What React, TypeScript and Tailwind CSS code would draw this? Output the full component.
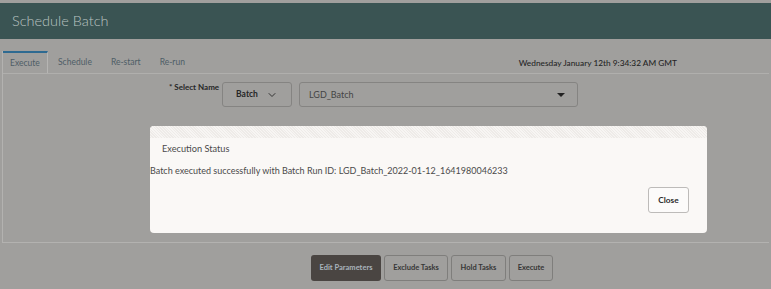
import { ChevronDown } from 'lucide-react';

const App = () => {
  return (
    <div
      className="relative h-[289px] w-[771px] overflow-hidden bg-[#a09f9d] text-[9px] text-[#2f2f2f]"
      style={{ fontFamily: 'Lato, "Noto Sans", sans-serif' }}>
      {/* Header */}
      <div className="mt-[3px] flex h-[36px] items-center bg-[#3a5453] px-[12px]">
        <h1 className="text-[14.5px] font-light text-[#b9c3c1]">Schedule Batch</h1>
      </div>

      {/* Panel */}
      <div className="mx-[2px] mt-[12px] h-[192px] border-b border-l border-[#b3b2b0]">
        {/* Tabs */}
        <div className="flex h-[23px] items-stretch border-b border-[#b0afad]">
          <div className="flex w-[45px] items-center justify-center border-r border-t-2 border-r-[#b6b5b3] border-t-[#2e6a91] pt-[1px] text-[8.5px] text-[#4e5d66]">
            Execute
          </div>
          <div className="flex items-center gap-[19px] pl-[10px] pt-[1px] text-[8.5px] text-[#4e5d66]">
            <span>Schedule</span>
            <span>Re-start</span>
            <span>Re-run</span>
          </div>
          <div className="ml-auto flex items-center whitespace-nowrap pr-[92px] pt-[2px] text-[8.3px] font-medium text-[#262626]">
            Wednesday January 12th 9:34:32 AM GMT
          </div>
        </div>

        {/* Select row */}
        <div className="mt-[8px] flex items-start pl-[164px]">
          <span className="-mt-[1px] w-[55px] whitespace-nowrap pl-[2px] text-[8px] font-bold text-[#262626]">* Select Name</span>
          <div className="flex h-[25px] w-[70px] items-center justify-center gap-[8px] rounded-[3px] border border-[#858482] text-[8.5px] font-bold text-[#262626]">
            Batch
            <ChevronDown className="h-[12px] w-[12px] text-[#333]" strokeWidth={2} />
          </div>
          <div className="ml-[7px] flex h-[25px] w-[279px] items-center justify-between rounded-[3px] border border-[#858482] pl-[9px] pr-[12px] text-[9px] text-[#444]">
            LGD_Batch
            <span className="h-0 w-0 border-x-[4px] border-t-[4px] border-x-transparent border-t-[#222]" />
          </div>
        </div>
      </div>

      {/* Action buttons */}
      <div className="mt-[12px] flex justify-center gap-[3px] pl-[93px] text-[7.5px] font-bold">
        <button className="h-[26px] w-[70px] whitespace-nowrap rounded-[3px] bg-[#4a4542] text-[#a9b4bc]">Edit Parameters</button>
        <button className="h-[26px] w-[64px] whitespace-nowrap rounded-[3px] border border-[#7f7e7c] text-[#363636]">Exclude Tasks</button>
        <button className="h-[26px] w-[55px] whitespace-nowrap rounded-[3px] border border-[#7f7e7c] text-[#363636]">Hold Tasks</button>
        <button className="h-[26px] w-[44px] whitespace-nowrap rounded-[3px] border border-[#7f7e7c] text-[#363636]">Execute</button>
      </div>

      {/* Dialog */}
      <div className="absolute left-[150px] top-[126px] h-[107px] w-[557px] overflow-hidden rounded-[4px] bg-[#faf8f6]">
        <div className="h-[12px] bg-[repeating-linear-gradient(45deg,#eeebe8_0px,#eeebe8_1px,#f7f5f3_1px,#f7f5f3_2px)]" />
        <div className="pl-[12px] pt-[4px] text-[9.2px] text-[#4a4a4a]">Execution Status</div>
        <div className="mt-[8px] whitespace-nowrap text-[9px] text-[#4a4a4a]">
          Batch executed successfully with Batch Run ID: LGD_Batch_2022-01-12_1641980046233
        </div>
        <div className="mt-[10px] flex justify-end pr-[18px]">
          <button className="h-[26px] w-[41px] rounded-[3px] border border-[#bdbbb9] bg-[#fcfbfa] text-[8.3px] font-bold text-[#2a2a2a]">
            Close
          </button>
        </div>
      </div>
    </div>
  );
};

export default App;
